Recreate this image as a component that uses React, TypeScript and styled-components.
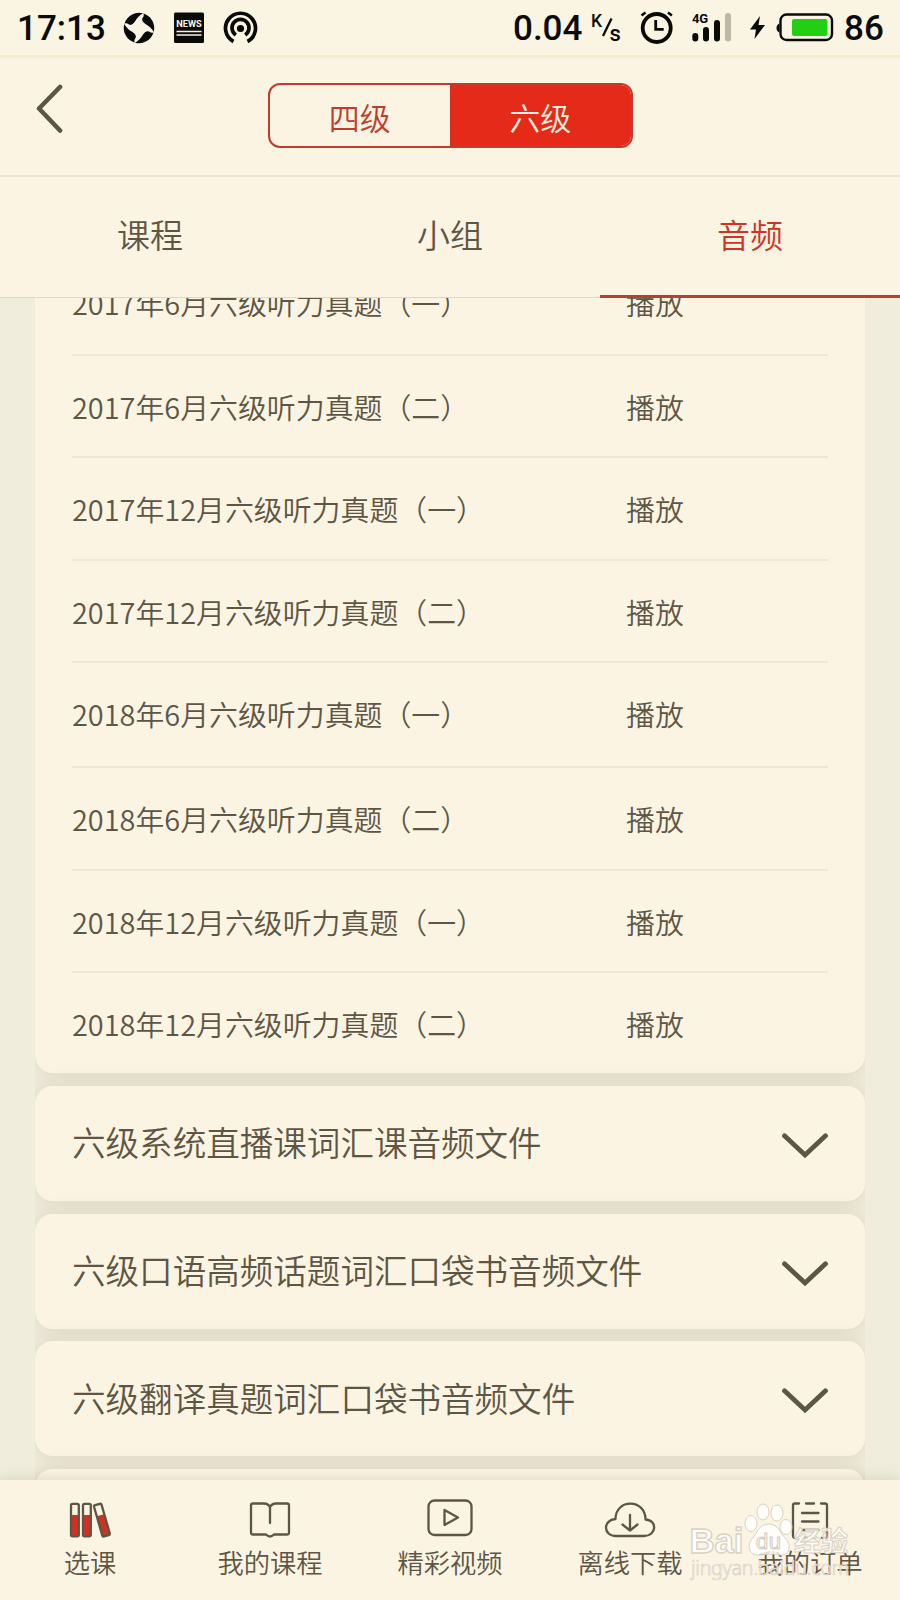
import React from 'react';
import styled, { createGlobalStyle } from 'styled-components';

const ink = '#5e5645';
const cream = '#fbf4e3';
const red = '#c23b2b';
const black = '#0a0a08';

const Global = createGlobalStyle`
  * { box-sizing: border-box; }
  body { margin: 0; background: #f0eddc; }
  svg { display: block; flex: none; }
`;

const Screen = styled.div`
  width: 900px;
  height: 1600px;
  display: flex;
  flex-direction: column;
  overflow: hidden;
  color: ${ink};
  background: #f0eddc;
  font-family: 'Noto Sans CJK SC', sans-serif;
  font-weight: 350;
`;

const StatusBar = styled.header`
  height: 58px;
  flex: none;
  display: grid;
  grid-template-columns: 103px 140px 253px 78px 49px 204px auto;
  align-items: center;
  padding-left: 17px;
  background: #faf4e2;
  border-bottom: 3px solid #f3ecd1;
  color: ${black};
  font-family: Roboto, sans-serif;
  font-weight: 500;
`;

const StatusText = styled.span`
  font-size: 35px;
  line-height: 53px;
  padding-top: 2px;
  white-space: nowrap;
`;

const TopBar = styled.div`
  height: 119px;
  flex: none;
  display: grid;
  grid-template-columns: 267.5px 365px 1fr;
  padding-top: 24.5px;
  background: ${cream};
  border-bottom: 2px solid #ece6d7;
`;

const BackButton = styled.div`
  padding: 1.5px 0 0 35px;
`;

const Segment = styled.div`
  height: 65px;
  display: grid;
  grid-template-columns: 1fr 1fr;
  border: 2.5px solid ${red};
  border-radius: 12px;
  overflow: hidden;
`;

const SegmentItem = styled.div<{ $active?: boolean }>`
  text-align: center;
  font-size: 31px;
  line-height: 64px;
  color: ${(p) => (p.$active ? '#fdeedd' : red)};
  background: ${(p) => (p.$active ? '#e62a19' : 'transparent')};
`;

const Tabs = styled.nav`
  height: 121px;
  flex: none;
  display: grid;
  grid-template-columns: repeat(3, 1fr);
  background: ${cream};
  border-bottom: 1px solid #ddd7c8;
`;

const Tab = styled.div<{ $active?: boolean }>`
  height: 121px;
  text-align: center;
  font-size: 33px;
  line-height: 115px;
  color: ${(p) => (p.$active ? '#d03426' : ink)};
  border-bottom: ${(p) => (p.$active ? '3px solid #b1432f' : '0')};
`;

const Content = styled.main`
  flex: 1;
  min-height: 0;
  overflow: hidden;
  display: flex;
  flex-direction: column;
`;

const Column = styled.div`
  flex: none;
  margin: -46px 35px 0;
  overflow: hidden;
  display: flex;
  flex-direction: column;
  gap: 12.6px;
`;

const Card = styled.section`
  flex: none;
  background: ${cream};
  border-radius: 18px;
  box-shadow: 0 0 20px rgba(105, 72, 45, 0.14);
`;

const AudioCard = styled(Card)`
  padding: 0 37px 0.4px;
`;

const AudioRow = styled.div<{ $height: number }>`
  height: ${(p) => p.$height}px;
  display: grid;
  grid-template-columns: 554px 1fr;
  font-size: 28.9px;
  line-height: 101px;
  white-space: nowrap;
  border-bottom: 2px solid #eee7d8;
  &:last-child { border-bottom: 0; }
`;

const FolderCard = styled(Card)`
  height: 115px;
  padding: 0 37px;
  display: flex;
  align-items: center;
  justify-content: space-between;
  font-size: 33.55px;
  line-height: 50px;
`;

const FolderName = styled.span`
  padding-bottom: 2px;
`;

const FolderToggle = styled.span`
  padding-top: 5px;
`;

const BottomNav = styled.footer`
  position: relative;
  height: 120px;
  flex: none;
  display: grid;
  grid-template-columns: repeat(5, 1fr);
  background: ${cream};
  box-shadow: 0 0 14px rgba(90, 75, 45, 0.18);
`;

const NavItem = styled.div`
  display: flex;
  flex-direction: column;
  align-items: center;
  gap: 1px;
  padding-top: 16px;
  font-size: 26.3px;
  line-height: 38px;
  white-space: nowrap;
`;

const Watermark = styled.svg`
  position: absolute;
  left: 685px;
  top: 20px;
`;

const audioRows = [
  { title: '2017年6月六级听力真题（一）', height: 104 },
  { title: '2017年6月六级听力真题（二）', height: 102.4 },
  { title: '2017年12月六级听力真题（一）', height: 102.3 },
  { title: '2017年12月六级听力真题（二）', height: 102.6 },
  { title: '2018年6月六级听力真题（一）', height: 104.7 },
  { title: '2018年6月六级听力真题（二）', height: 102.6 },
  { title: '2018年12月六级听力真题（一）', height: 102.4 },
  { title: '2018年12月六级听力真题（二）', height: 100 },
];

const folders = [
  '六级系统直播课词汇课音频文件',
  '六级口语高频话题词汇口袋书音频文件',
  '六级翻译真题词汇口袋书音频文件',
  '',
];

const Chevron = () => (
  <svg width="46" height="26" viewBox="0 0 46 26" fill="none" stroke={ink} strokeWidth="4.8" strokeLinecap="round" strokeLinejoin="miter">
    <path d="M2.500 2.800 L23 22 L43.500 2.800" />
  </svg>
);

const lobe = 'M-14.500 -4.500A15.200 15.200 0 0 1 4 -14.700Q-1 -12 -4 -6.500Q-7 -2 -10 -3.500Q-12.500 -5.500 -14.500 -4.500Z';

const NoticeIcons = () => (
  <svg width="140" height="36" viewBox="120 10 140 36">
    <g fill={black}>
      {[0, 90, 180, 270].map((angle) => (
        <path key={angle} d={lobe} transform={`translate(139 28) rotate(${angle})`} />
      ))}
    </g>
    <rect x="174" y="12.500" width="30" height="30.500" rx="1.500" fill={black} />
    <text x="176.300" y="27" fontFamily="Roboto" fontWeight="700" fontSize="9.800" textLength="25.500" lengthAdjust="spacingAndGlyphs" fill="#faf4e2">NEWS</text>
    <path d="M176.500 31.500h25M176.500 35h25" stroke="#faf4e2" strokeWidth="1.500" />
    <g fill="none" stroke={black} strokeWidth="3.700">
      <path d="M233.500 41.500 A15 15 0 1 1 247.500 41.500" />
      <path d="M235.800 35 A8.500 8.500 0 1 1 245.200 35" />
    </g>
    <circle cx="240.500" cy="28.500" r="3.600" fill={black} />
  </svg>
);

const SpeedUnit = () => (
  <svg width="49" height="36" viewBox="591 10 49 36" fill={black}>
    <text x="591" y="27" fontFamily="Roboto" fontWeight="500" fontSize="17.500">K</text>
    <path d="M603 36 L611.500 18.500" stroke={black} strokeWidth="2.300" />
    <text x="609.500" y="40.500" fontFamily="Roboto" fontWeight="500" fontSize="22">s</text>
  </svg>
);

const SystemIcons = () => (
  <svg width="204" height="36" viewBox="640 10 204 36" fill="none" stroke={black}>
    <circle cx="656.700" cy="28" r="14" strokeWidth="3.800" />
    <path d="M655.700 20v9.300h8" strokeWidth="2.800" />
    <path d="M641.500 15.500l4-3M671.900 15.500l-4-3" strokeWidth="2.600" />
    <text x="692" y="23" fill={black} stroke="none" fontFamily="Roboto" fontWeight="700" fontSize="13" textLength="16">4G</text>
    <g strokeWidth="6" strokeLinecap="round">
      <path d="M695.300 36v2.500M706 30v8.500M717 23v15.500" />
      <path d="M728 16v22.500" stroke="#bdb8a6" />
    </g>
    <path d="M760 16 L750 29.500 H756 L754.500 39 L765 25 H758.500Z" fill={black} stroke="none" />
    <rect x="780.500" y="14.500" width="51.500" height="25.500" rx="6" strokeWidth="2.400" />
    <path d="M779.500 23.500 Q776.500 24.500 776.500 28 Q776.500 31.500 779.500 32.500Z" fill={black} stroke="none" />
    <rect x="792" y="19" width="35.500" height="17" rx="2" fill="#22cf12" stroke="none" />
  </svg>
);

const iconProps = {
  width: 52,
  height: 46,
  viewBox: '0 0 52 46',
  fill: 'none',
  stroke: ink,
  strokeWidth: 2.3,
  strokeLinejoin: 'round' as const,
  strokeLinecap: 'round' as const,
};

const Binder = ({ x, transform }: { x: number; transform?: string }) => (
  <g transform={transform}>
    <rect x={x} y="19" width="7.500" height="21" fill="#cf3123" stroke="none" />
    <rect x={x} y="7.800" width="7.800" height="32.500" rx="1.500" />
  </g>
);

const BooksIcon = () => (
  <svg {...iconProps}>
    <Binder x={7} />
    <Binder x={19} />
    <Binder x={34} transform="rotate(-16 38 24)" />
  </svg>
);

const BookIcon = () => (
  <svg {...iconProps}>
    <path d="M26 27V11Q24 7.500 20 7.500H9Q7 7.500 7 9.500V36.500Q7 38.500 9 38.500H22Q24 40.500 26 40.500Q28 40.500 30 38.500H43Q45 38.500 45 36.500V9.500Q45 7.500 43 7.500H32Q28 7.500 26 11" />
  </svg>
);

const VideoIcon = () => (
  <svg {...iconProps}>
    <rect x="4.500" y="4.500" width="43" height="34.500" rx="6" />
    <path d="M20.500 14V29L34 21.500Z" />
  </svg>
);

const CloudIcon = () => (
  <svg {...iconProps}>
    <path d="M12 40H40C53 40 53.500 24 41.500 23.500C41.500 2.500 11.500 2.500 11.500 23C-1.500 24 -1 40 12 40Z" />
    <path d="M26 19V34.500M18.500 28.500L26 34.500L33.500 28.500" />
  </svg>
);

const OrderIcon = () => (
  <svg {...iconProps}>
    <path d="M15 7.500H11Q9 7.500 9 9.500V39.500Q9 41.800 11 41.800H14M37 7.500H41Q43 7.500 43 9.500V39.500Q43 41.800 41 41.800H38M22 7.500H30M20 41.800H23M29 41.800H32M18 17H34.500M18 25.500H34.500M18 34H34.500" />
  </svg>
);

const navItems = [
  { label: '选课', Icon: BooksIcon },
  { label: '我的课程', Icon: BookIcon },
  { label: '精彩视频', Icon: VideoIcon },
  { label: '离线下载', Icon: CloudIcon },
  { label: '我的订单', Icon: OrderIcon },
];

const BaiduMark = () => (
  <Watermark width="170" height="90" viewBox="685 1500 170 90" fill="#ffffff" fillOpacity="0.8" stroke="#d9d2c5" strokeWidth="1">
    <ellipse cx="751" cy="1523.500" rx="6" ry="8" />
    <ellipse cx="763" cy="1512" rx="6" ry="8" />
    <ellipse cx="777" cy="1513" rx="6" ry="8" />
    <ellipse cx="786" cy="1527" rx="6" ry="7.500" />
    <path d="M769 1524C758 1524 757 1534 752 1539C746 1547 750 1555 758 1555C765 1555 773 1553 780 1555C789 1556 792 1546 786 1539C780 1534 779 1524 769 1524Z" />
    <g fontFamily="Liberation Sans" fontWeight="700">
      <text x="689.500" y="1553" fontSize="35.500" strokeWidth="1.400" textLength="54" lengthAdjust="spacingAndGlyphs">Bai</text>
      <text x="756" y="1549" fontSize="22" fontWeight="400" textLength="25" fill="#ffffff" stroke="#d3ccbf">du</text>
    </g>
    <text x="794" y="1551" fontSize="27" fontWeight="700" textLength="54" fontFamily="Noto Sans CJK SC">经验</text>
    <text x="691" y="1575" fontSize="19.500" textLength="158" strokeWidth="0.700" fontFamily="Noto Sans">jingyan.baidu.com</text>
  </Watermark>
);

export default function App() {
  return (
    <>
      <Global />
      <Screen>
        <StatusBar>
          <StatusText>17:13</StatusText>
          <NoticeIcons />
          <span />
          <StatusText>0.04</StatusText>
          <SpeedUnit />
          <SystemIcons />
          <StatusText>86</StatusText>
        </StatusBar>
        <TopBar>
          <BackButton>
            <svg width="30" height="50" viewBox="0 0 30 50" fill="none" stroke={ink} strokeWidth="4.600" strokeLinecap="round" strokeLinejoin="round">
              <path d="M25 3 L4 24.500 L25 46.500" />
            </svg>
          </BackButton>
          <Segment>
            <SegmentItem>四级</SegmentItem>
            <SegmentItem $active>六级</SegmentItem>
          </Segment>
        </TopBar>
        <Tabs>
          <Tab>课程</Tab>
          <Tab>小组</Tab>
          <Tab $active>音频</Tab>
        </Tabs>
        <Content>
          <Column>
            <AudioCard>
              {audioRows.map((row) => (
                <AudioRow key={row.title} $height={row.height}>
                  <span>{row.title}</span>
                  <span>播放</span>
                </AudioRow>
              ))}
            </AudioCard>
            {folders.map((name) => (
              <FolderCard key={name}>
                <FolderName>{name}</FolderName>
                <FolderToggle>
                  <Chevron />
                </FolderToggle>
              </FolderCard>
            ))}
          </Column>
        </Content>
        <BottomNav>
          {navItems.map(({ label, Icon }) => (
            <NavItem key={label}>
              <Icon />
              <span>{label}</span>
            </NavItem>
          ))}
          <BaiduMark />
        </BottomNav>
      </Screen>
    </>
  );
}
